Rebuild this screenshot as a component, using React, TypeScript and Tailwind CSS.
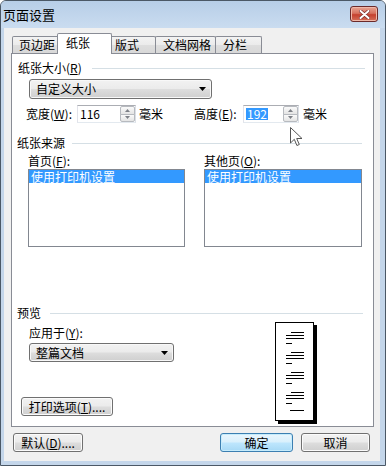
import React from "react";

// Vista-style "页面设置" dialog, 纸张 tab

function Key({ k }: { k: string }) {
  return <span className="underline underline-offset-1">{k}</span>;
}

function GroupLabel({ children, lineClass }: { children: React.ReactNode; lineClass: string }) {
  return (
    <div className="flex h-[14px] items-center">
      <span className="whitespace-nowrap">{children}</span>
      <div className={`h-px flex-1 bg-[#d5dfe5] ${lineClass}`} />
    </div>
  );
}

function Arrow() {
  return (
    <svg width="7" height="4" viewBox="0 0 7 4" className="shrink-0">
      <path d="M0 0h7L3.5 4z" fill="#000" />
    </svg>
  );
}

function Combo({ text, className }: { text: string; className: string }) {
  return (
    <div
      className={`flex items-center justify-between rounded-[3px] border border-[#707070] bg-[linear-gradient(#f2f2f2_0%,#ebebeb_48%,#dddddd_52%,#cfcfcf_100%)] pl-[6px] pr-[5px] shadow-[inset_0_0_0_1px_#f8f8f8] ${className}`}
    >
      <span className="text-[12px] leading-[14px]">{text}</span>
      <Arrow />
    </div>
  );
}

function Spin() {
  return (
    <div className="flex h-full w-[15px] flex-col">
      <div className="flex flex-1 items-center justify-center rounded-t-[2px] border border-[#b7babf] bg-[linear-gradient(#fafafa,#e4e4e4)]">
        <svg width="5" height="3" viewBox="0 0 5 3">
          <path d="M0 3h5L2.5 0z" fill="#7d8087" />
        </svg>
      </div>
      <div className="-mt-px flex flex-1 items-center justify-center rounded-b-[2px] border border-[#b7babf] bg-[linear-gradient(#fafafa,#e4e4e4)]">
        <svg width="5" height="3" viewBox="0 0 5 3">
          <path d="M0 0h5L2.5 3z" fill="#7d8087" />
        </svg>
      </div>
    </div>
  );
}

function NumBox({ value, selected, className }: { value: string; selected?: boolean; className: string }) {
  return (
    <div
      className={`flex h-[18px] border border-[#abadb3] border-b-[#e3e9ef] border-l-[#e2e3ea] border-r-[#dbdfe6] bg-white ${className}`}
    >
      <div className="flex flex-1 items-center pl-[2px]">
        {selected ? (
          <span className="bg-[#3399ff] px-px leading-[12px] text-white">{value}</span>
        ) : (
          <span className="leading-[14px]">{value}</span>
        )}
      </div>
      <Spin />
    </div>
  );
}

function ListBox({ className }: { className: string }) {
  return (
    <div className={`h-[78px] border border-[#828790] bg-white ${className}`}>
      <div className="h-[13px] bg-[#3399ff] pl-[2px] leading-[13px] text-white">使用打印机设置</div>
    </div>
  );
}

function Btn({ children, className, primary }: { children: React.ReactNode; className: string; primary?: boolean }) {
  const skin = primary
    ? "border-[#3c7fb1] bg-[linear-gradient(#eaf6fd_0%,#d9f0fc_48%,#bee6fd_52%,#a7d9f5_100%)] shadow-[inset_0_0_0_1px_#c6ecfc]"
    : "border-[#707070] bg-[linear-gradient(#f2f2f2_0%,#ebebeb_48%,#dddddd_52%,#cfcfcf_100%)] shadow-[inset_0_0_0_1px_#fbfbfb]";
  return (
    <div className={`flex h-[19px] items-center justify-center rounded-[3px] border text-[12px] leading-[14px] ${skin} ${className}`}>
      {children}
    </div>
  );
}

function Tab({ label, active, className }: { label: string; active?: boolean; className: string }) {
  if (active) {
    return (
      <div
        className={`relative z-10 -mb-px flex h-[21px] items-start rounded-t-[2px] border border-b-0 border-[#898c95] bg-white pt-[2px] ${className}`}
      >
        {label}
      </div>
    );
  }
  return (
    <div
      className={`flex h-[17px] items-center rounded-t-[2px] border border-b-0 border-[#898c95] bg-[linear-gradient(#f3f3f3_0%,#ebebeb_50%,#dedede_52%,#d8d8d8_100%)] ${className}`}
    >
      {label}
    </div>
  );
}

function PageLines() {
  const group = (
    <>
      <div className="ml-[15px] h-px w-[13px] bg-black" />
      <div className="ml-[10px] mt-[2px] h-px w-[18px] bg-black" />
      <div className="ml-[10px] mt-[2px] h-px w-[18px] bg-black" />
      <div className="ml-[10px] mt-[4px] h-px w-[6px] bg-black" />
    </>
  );
  return (
    <div className="flex flex-col pt-[9px]">
      {group}
      <div className="mt-[8px]" />
      {group}
      <div className="mt-[8px]" />
      {group}
      <div className="mt-[8px]" />
      {group}
      <div className="ml-[14px] mt-[6px] h-px w-[14px] bg-black" />
    </div>
  );
}

function Cursor() {
  return (
    <svg width="13" height="20" viewBox="0 0 13 20" className="absolute left-[289px] top-[126px]">
      <path
        d="M0.5 0.5v15.5l3.8-3.7 2.6 6.2 2.4-1-2.6-6h5.3z"
        fill="#fff"
        stroke="#555"
        strokeWidth="1"
        strokeLinejoin="round"
      />
    </svg>
  );
}

export default function App() {
  return (
    <div className="relative h-[466px] w-[386px] overflow-hidden rounded-t-[6px] border border-[#4b5866] bg-[#c4d6ea] font-['Noto_Sans_CJK_SC','Noto_Sans',sans-serif] text-[12px] leading-[14px] text-black">
      {/* title bar */}
      <div className="flex h-[27px] items-start justify-between bg-[linear-gradient(#b7cee7,#cadcf0)] pl-[2px] pr-[7px]">
        <span className="mt-[6px] text-[13px] leading-[15px]">页面设置</span>
        <div className="mt-[5px] flex h-[16px] w-[28px] items-center justify-center rounded-[3px] border border-[#6b2a2a] bg-[linear-gradient(#e8a593_0%,#d7725f_45%,#c5402e_55%,#d4705a_100%)] shadow-[inset_0_0_0_1px_#f0b8a8]">
          <svg width="11" height="9" viewBox="0 0 11 9">
            <path d="M1.5 1l8 7M9.5 1l-8 7" stroke="#7a3030" strokeWidth="3.4" strokeLinecap="round" />
            <path d="M1.5 1l8 7M9.5 1l-8 7" stroke="#fff" strokeWidth="2" strokeLinecap="round" />
          </svg>
        </div>
      </div>

      {/* client area */}
      <div className="ml-[3px] flex h-[433px] w-[376px] flex-col bg-[#f0f0f0] pt-[5px]">
        {/* tabs */}
        <div className="flex h-[20px] items-end pl-[8px]">
          <Tab label="页边距" className="w-[47px] pl-[6px]" />
          <Tab label="纸张" active className="-ml-[2px] w-[55px] pl-[8px]" />
          <Tab label="版式" className="-ml-[2px] w-[46px] pl-[4px]" />
          <Tab label="文档网格" className="-ml-px w-[61px] pl-[7px]" />
          <Tab label="分栏" className="-ml-px w-[47px] pl-[7px]" />
        </div>

        {/* tab panel */}
        <div className="ml-[7px] flex h-[374px] w-[363px] flex-col border border-[#898c95] bg-white pl-[5px] pr-[8px]">
          <div className="mt-[7px] pl-px">
            <GroupLabel lineClass="ml-[10px]">
              纸张大小(<Key k="R" />)
            </GroupLabel>
          </div>

          <Combo text="自定义大小" className="ml-[12px] mt-[4px] h-[20px] w-[183px]" />

          <div className="mt-[6px] flex h-[18px] items-center pl-[9px]">
            <span className="w-[51px] whitespace-nowrap">
              宽度(<Key k="W" />):
            </span>
            <NumBox value="116" className="w-[59px]" />
            <span className="ml-[3px]">毫米</span>
            <span className="ml-[31px] w-[49px] whitespace-nowrap">
              高度(<Key k="E" />):
            </span>
            <NumBox value="192" selected className="w-[56px]" />
            <span className="ml-[4px]">毫米</span>
          </div>

          <div className="mt-[13px]">
            <GroupLabel lineClass="ml-[7px] mr-[3px]">纸张来源</GroupLabel>
          </div>

          <div className="mt-[4px] flex">
            <div className="ml-[11px] flex w-[157px] flex-col">
              <span className="h-[14px]">
                首页(<Key k="F" />):
              </span>
              <ListBox className="mt-px" />
            </div>
            <div className="ml-[19px] flex w-[158px] flex-col">
              <span className="h-[14px]">
                其他页(<Key k="O" />):
              </span>
              <ListBox className="mt-px" />
            </div>
          </div>

          <div className="mt-[59px]">
            <GroupLabel lineClass="ml-[9px] mr-[2px]">预览</GroupLabel>
          </div>

          <div className="flex">
            <div className="ml-[12px] flex w-[145px] flex-col">
              <span className="mt-[6px] h-[14px]">
                应用于(<Key k="Y" />):
              </span>
              <Combo text="整篇文档" className="mt-[3px] h-[19px] w-[145px]" />
              <Btn className="-ml-[8px] mt-[35px] w-[92px]">
                打印选项(<Key k="T" />)....
              </Btn>
            </div>
            <div className="ml-[101px] mt-[2px] h-[99px] w-[39px] border border-black bg-white shadow-[3px_3px_0_#000]">
              <PageLines />
            </div>
          </div>
        </div>

        {/* dialog buttons */}
        <div className="mt-[6px] flex">
          <Btn className="ml-[9px] w-[70px]">
            默认(<Key k="D" />)....
          </Btn>
          <Btn primary className="ml-[137px] w-[73px]">
            确定
          </Btn>
          <Btn className="ml-[8px] w-[69px]">取消</Btn>
        </div>
      </div>

      <Cursor />
    </div>
  );
}
